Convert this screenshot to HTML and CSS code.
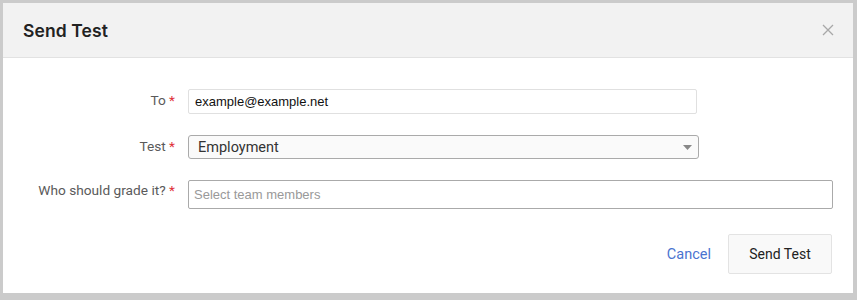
FILE: index.html
```html
<!DOCTYPE html>
<html>
<head>
<meta charset="utf-8">
<link rel="stylesheet" href="styles.css">
</head>
<body>
<div class="modal">
  <div class="modal-header">
    <h2 class="title">Send Test</h2>
    <span class="close">
      <svg width="12" height="12" viewBox="0 0 12 12"><path d="M1 1L11 11M11 1L1 11" stroke="#a8a8a8" stroke-width="1.3" fill="none"/></svg>
    </span>
  </div>
  <div class="modal-body">
    <div class="row row-to">
      <label class="label">To <span class="req">*</span></label>
      <div class="input input-to">example@example.net</div>
    </div>
    <div class="row row-test">
      <label class="label">Test <span class="req">*</span></label>
      <div class="select">
        <span>Employment</span>
        <svg width="9" height="5" viewBox="0 0 9 5"><path d="M0 0H9L4.5 5Z" fill="#888"/></svg>
      </div>
    </div>
    <div class="row row-who">
      <label class="label">Who should grade it? <span class="req">*</span></label>
      <div class="input input-who">Select team members</div>
    </div>
  </div>
  <div class="modal-footer">
    <a class="cancel">Cancel</a>
    <button class="btn">Send Test</button>
  </div>
</div>
</body>
</html>
```
FILE: styles.css
```css
html, body { margin: 0; padding: 0; }
body {
  background: #cbcbcb;
  width: 857px;
  height: 300px;
  overflow: hidden;
  font-family: Roboto, "Liberation Sans", sans-serif;
}
.modal {
  margin: 3px 0 0 3px;
  width: 850px;
  height: 290px;
  background: #fff;
  display: flex;
  flex-direction: column;
}
.modal-header {
  height: 54px;
  background: #f2f2f2;
  border-bottom: 1px solid #e2e2e2;
  display: flex;
  align-items: center;
  justify-content: space-between;
  padding: 0 19px 0 20px;
}
.title {
  margin: 0;
  font-family: Inter, "Liberation Sans", sans-serif;
  font-size: 17.5px;
  font-weight: 600;
  color: #222;
  letter-spacing: 0.1px;
}
.close { display: flex; }
.modal-body {
  padding-top: 31px;
  display: flex;
  flex-direction: column;
}
.row {
  display: flex;
  align-items: flex-start;
}
.label {
  width: 172px;
  text-align: right;
  font-size: 13.7px;
  color: #5a5a5a;
  padding-top: 3px;
  box-sizing: border-box;
  flex: none;
}
.req { color: #e0303a; }
.input, .select {
  margin-left: 13px;
  box-sizing: border-box;
  font-size: 13px;
}
.input-to {
  width: 509px;
  height: 25px;
  border: 1px solid #e0e0e0;
  border-radius: 2px;
  padding: 4px 0 0 6px;
  font-family: "Liberation Sans", Arial, sans-serif;
  color: #111;
}
.row-test { margin-top: 21px; }
.select {
  width: 511px;
  height: 24px;
  border: 1px solid #aaa;
  border-radius: 3px;
  background: #fafafa;
  display: flex;
  align-items: center;
  justify-content: space-between;
  padding: 0 6px 0 9px;
  font-size: 14.5px;
  color: #333;
}
.select span { padding-top: 1px; }
.row-who { margin-top: 21px; }
.row-who .label { padding-top: 2px; }
.input-who {
  width: 645px;
  height: 29px;
  border: 1px solid #aaa;
  border-radius: 2px;
  padding: 6px 0 0 5px;
  color: #999;
  font-family: "Liberation Sans", Arial, sans-serif;
  font-size: 13px;
}
.modal-footer {
  margin-top: 25px;
  display: flex;
  justify-content: flex-end;
  align-items: center;
  padding-right: 21px;
}
.cancel {
  font-size: 14.5px;
  color: #4a73d0;
  margin-right: 17px;
}
.btn {
  width: 104px;
  height: 40px;
  border: 1px solid #e3e3e3;
  border-radius: 2px;
  background: #f9f9f9;
  font-family: Roboto, "Liberation Sans", sans-serif;
  font-size: 14px;
  color: #222;
  padding: 0;
}
```
